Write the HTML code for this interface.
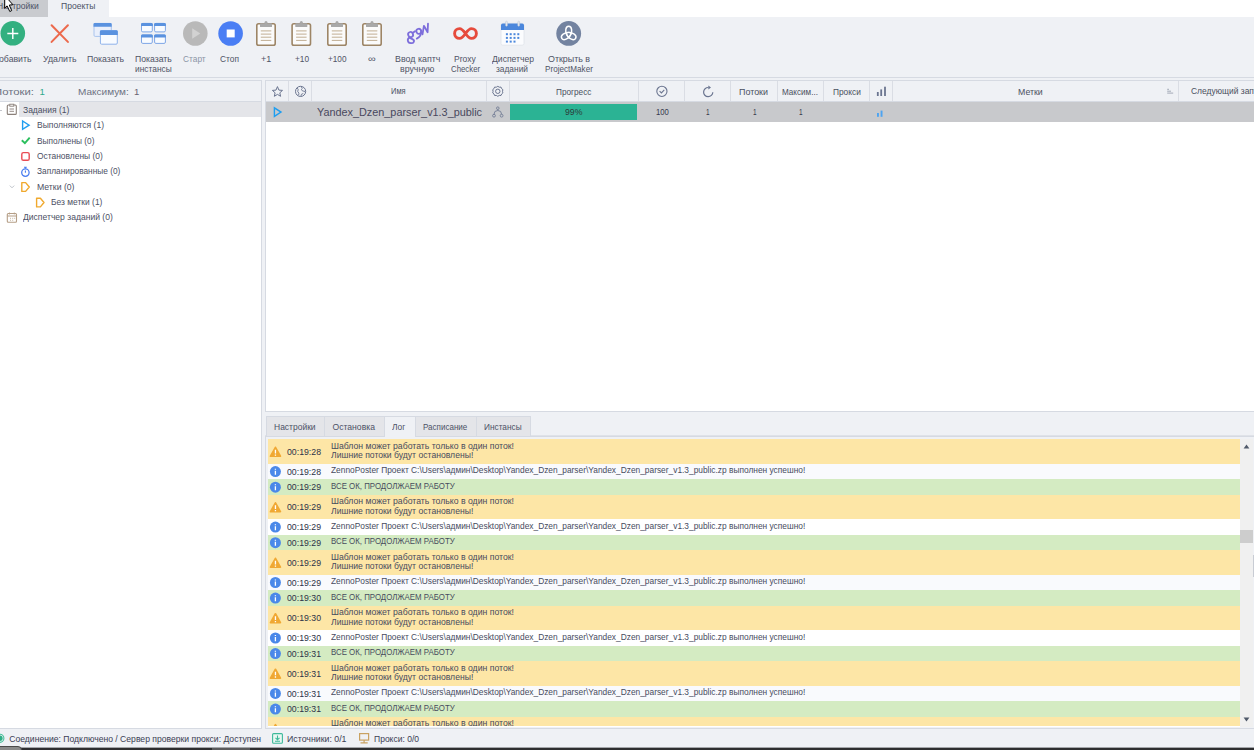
<!DOCTYPE html>
<html><head><meta charset="utf-8"><style>
html,body{margin:0;padding:0;}
body{width:1254px;height:750px;overflow:hidden;position:relative;background:#eff1f5;font-family:"Liberation Sans", sans-serif;}
.t{position:absolute;white-space:nowrap;line-height:1.117;transform-origin:0 0;font-family:"Liberation Sans", sans-serif;}
svg{overflow:visible}
</style></head><body>
<div style="position:absolute;left:0px;top:0px;width:1254px;height:17px;background:#ffffff;"></div>
<div style="position:absolute;left:0px;top:0px;width:48px;height:17px;background:#c9cbcf;"></div>
<div style="position:absolute;left:48px;top:0px;width:61px;height:17px;background:#eff1f5;"></div>
<div class="t" style="left:-3.50px;top:2.00px;font-size:8.6px;color:#4c5266;transform:scaleX(0.9919);">Настройки</div>
<div class="t" style="left:60.70px;top:2.00px;font-size:8.6px;color:#4c5266;transform:scaleX(0.9947);">Проекты</div>
<div style="position:absolute;left:0px;top:17px;width:1254px;height:60px;background:#eff1f5;"></div>
<div style="position:absolute;left:0px;top:77px;width:1254px;height:1px;background:#d6dae2;"></div>
<div style="position:absolute;left:0px;top:78px;width:1254px;height:672px;background:#eff1f5;"></div>
<svg style="position:absolute;left:0px;top:18px;" width="640" height="30" viewBox="0 18 640 30"><circle cx="12.8" cy="33.3" r="12.3" fill="#33b080"/><path d="M7.3 33.4H18.3M12.8 27.9V38.9" stroke="#fff" stroke-width="1.45"/><path d="M51.6 25.3L67.9 41.9M67.9 25.3L51.6 41.9" stroke="#ec6a4d" stroke-width="2.05" stroke-linecap="round"/><rect x="94" y="23.4" width="17.3" height="13" rx="1.2" fill="#e9effb" stroke="#a9c4ee" stroke-width="1"/><path d="M93.5 24.2a1.2 1.2 0 0 1 1.2-1.3h15.8a1.2 1.2 0 0 1 1.2 1.3V26.8H93.5Z" fill="#5a92df"/><rect x="100.4" y="30.7" width="16.9" height="13.5" rx="1.2" fill="#f8fbff" stroke="#8fb3ea" stroke-width="1"/><path d="M99.9 31.5a1.2 1.2 0 0 1 1.2-1.3h15.5a1.2 1.2 0 0 1 1.2 1.3V34.9H99.9Z" fill="#5a92df"/></svg>
<svg style="position:absolute;left:130px;top:18px;" width="50" height="30" viewBox="130 18 50 30"><rect x="141.5" y="23.4" width="10.8" height="8.5" rx="1.3" fill="#f8fbff" stroke="#7ea6e6" stroke-width="1"/><path d="M141 24.2a1.3 1.3 0 0 1 1.3-1.3h9.2a1.3 1.3 0 0 1 1.3 1.3V26.099999999999998H141Z" fill="#5a92df"/><rect x="154.6" y="23.4" width="10.8" height="8.5" rx="1.3" fill="#f8fbff" stroke="#7ea6e6" stroke-width="1"/><path d="M154.1 24.2a1.3 1.3 0 0 1 1.3-1.3h9.2a1.3 1.3 0 0 1 1.3 1.3V26.099999999999998H154.1Z" fill="#5a92df"/><rect x="141.5" y="34.9" width="10.8" height="8.5" rx="1.3" fill="#f8fbff" stroke="#7ea6e6" stroke-width="1"/><path d="M141 35.699999999999996a1.3 1.3 0 0 1 1.3-1.3h9.2a1.3 1.3 0 0 1 1.3 1.3V37.6H141Z" fill="#5a92df"/><rect x="154.6" y="34.9" width="10.8" height="8.5" rx="1.3" fill="#f8fbff" stroke="#7ea6e6" stroke-width="1"/><path d="M154.1 35.699999999999996a1.3 1.3 0 0 1 1.3-1.3h9.2a1.3 1.3 0 0 1 1.3 1.3V37.6H154.1Z" fill="#5a92df"/></svg>
<svg style="position:absolute;left:180px;top:18px;" width="70" height="30" viewBox="180 18 70 30"><circle cx="195.3" cy="33.5" r="12.3" fill="#b9b9b9"/><path d="M192.2 28.3V38.7L200.3 33.5Z" fill="#d2d2d2"/><circle cx="230.6" cy="33.5" r="12.3" fill="#4a7ef4"/><rect x="226.7" y="29.5" width="8" height="7.9" fill="#fff"/></svg>
<svg style="position:absolute;left:250px;top:18px;" width="140" height="30" viewBox="250 18 140 30"><rect x="256.8" y="23.8" width="18.4" height="21.4" rx="1.8" fill="#fbfbfb" stroke="#9d8566" stroke-width="1.6"/><rect x="260" y="23.2" width="12" height="3.8" rx="0.6" fill="#a9a9a9"/><circle cx="266" cy="22.6" r="1.5" fill="#a9a9a9"/><path d="M260.8 30.9H271.3" stroke="#c1ae93" stroke-width="1"/><path d="M260.8 34.1H271.3" stroke="#c1ae93" stroke-width="1"/><path d="M260.8 37.2H271.3" stroke="#c1ae93" stroke-width="1"/><path d="M260.8 40.4H271.3" stroke="#c1ae93" stroke-width="1"/><rect x="292.1" y="23.8" width="18.4" height="21.4" rx="1.8" fill="#fbfbfb" stroke="#9d8566" stroke-width="1.6"/><rect x="295.3" y="23.2" width="12" height="3.8" rx="0.6" fill="#a9a9a9"/><circle cx="301.3" cy="22.6" r="1.5" fill="#a9a9a9"/><path d="M296.1 30.9H306.6" stroke="#c1ae93" stroke-width="1"/><path d="M296.1 34.1H306.6" stroke="#c1ae93" stroke-width="1"/><path d="M296.1 37.2H306.6" stroke="#c1ae93" stroke-width="1"/><path d="M296.1 40.4H306.6" stroke="#c1ae93" stroke-width="1"/><rect x="327.8" y="23.8" width="18.4" height="21.4" rx="1.8" fill="#fbfbfb" stroke="#9d8566" stroke-width="1.6"/><rect x="331" y="23.2" width="12" height="3.8" rx="0.6" fill="#a9a9a9"/><circle cx="337" cy="22.6" r="1.5" fill="#a9a9a9"/><path d="M331.8 30.9H342.3" stroke="#c1ae93" stroke-width="1"/><path d="M331.8 34.1H342.3" stroke="#c1ae93" stroke-width="1"/><path d="M331.8 37.2H342.3" stroke="#c1ae93" stroke-width="1"/><path d="M331.8 40.4H342.3" stroke="#c1ae93" stroke-width="1"/><rect x="362.8" y="23.8" width="18.4" height="21.4" rx="1.8" fill="#fbfbfb" stroke="#9d8566" stroke-width="1.6"/><rect x="366" y="23.2" width="12" height="3.8" rx="0.6" fill="#a9a9a9"/><circle cx="372" cy="22.6" r="1.5" fill="#a9a9a9"/><path d="M366.8 30.9H377.3" stroke="#c1ae93" stroke-width="1"/><path d="M366.8 34.1H377.3" stroke="#c1ae93" stroke-width="1"/><path d="M366.8 37.2H377.3" stroke="#c1ae93" stroke-width="1"/><path d="M366.8 40.4H377.3" stroke="#c1ae93" stroke-width="1"/></svg>
<svg style="position:absolute;left:400px;top:18px;" width="40" height="30" viewBox="400 18 40 30"><g fill="none" stroke="#7d6edb" stroke-width="1.8" stroke-linecap="round" stroke-linejoin="round"><ellipse cx="410.6" cy="34.6" rx="2.4" ry="2.6" transform="rotate(-25 410.6 34.6)"/><path d="M412.6 33L415 31.2"/><path d="M409.8 37.4C406.8 38.6 407.2 43 410.8 43.2C414 43.4 415 40.6 412.8 39.4C411.8 38.8 410.6 38.6 409.8 37.4"/><ellipse cx="418.8" cy="31.3" rx="2.4" ry="2.5" transform="rotate(-25 418.8 31.3)"/><path d="M421.2 30.4C421.6 34 420 37 416.8 38.6"/><path d="M422.5 34.4L423.9 25.8L427.6 32.2L428 23.6"/></g></svg>
<svg style="position:absolute;left:445px;top:18px;" width="40" height="30" viewBox="445 18 40 30"><path d="M465.5 33.5C463 30 461.2 28.6 459.6 28.6C456.6 28.6 454.6 31 454.6 33.5C454.6 36 456.6 38.4 459.6 38.4C461.2 38.4 463 37 465.5 33.5C468 30 469.8 28.6 471.4 28.6C474.4 28.6 476.4 31 476.4 33.5C476.4 36 474.4 38.4 471.4 38.4C469.8 38.4 468 37 465.5 33.5Z" fill="none" stroke="#e64b3c" stroke-width="2.9"/></svg>
<svg style="position:absolute;left:495px;top:18px;" width="35" height="30" viewBox="495 18 35 30"><rect x="501" y="23.4" width="23" height="21.8" rx="1.8" fill="#fbfcfe" stroke="#dfe3ea" stroke-width="0.8"/><path d="M501 25.2a1.8 1.8 0 0 1 1.8-1.8h19.4a1.8 1.8 0 0 1 1.8 1.8V30.1H501Z" fill="#4b87dc"/><rect x="505.6" y="21.2" width="1.8" height="5" rx="0.8" fill="#e8ebf0" stroke="#b9c3d2" stroke-width="0.5"/><rect x="517.8" y="21.2" width="1.8" height="5" rx="0.8" fill="#e8ebf0" stroke="#b9c3d2" stroke-width="0.5"/><rect x="505.9" y="33.2" width="2" height="2" fill="#4b87dc"/><rect x="509.7" y="33.2" width="2" height="2" fill="#4b87dc"/><rect x="513.5" y="33.2" width="2" height="2" fill="#4b87dc"/><rect x="517.3" y="33.2" width="2" height="2" fill="#4b87dc"/><rect x="505.9" y="36.9" width="2" height="2" fill="#4b87dc"/><rect x="509.7" y="36.9" width="2" height="2" fill="#4b87dc"/><rect x="513.5" y="36.9" width="2" height="2" fill="#4b87dc"/><rect x="517.3" y="36.9" width="2" height="2" fill="#4b87dc"/><rect x="505.9" y="40.6" width="2" height="2" fill="#4b87dc"/><rect x="509.7" y="40.6" width="2" height="2" fill="#4b87dc"/><rect x="513.5" y="40.6" width="2" height="2" fill="#4b87dc"/></svg>
<svg style="position:absolute;left:550px;top:18px;" width="40" height="30" viewBox="550 18 40 30"><circle cx="568.7" cy="33.4" r="12.4" fill="#7383a0"/><path d="M568.7 37.3C566.3 35 565.6 31.6 565.8 29.6C566 27.5 567.2 26.3 568.7 26.3C570.2 26.3 571.4 27.5 571.6 29.6C571.8 31.6 571.1 35 568.7 37.3Z" transform="rotate(0 568.7 34.3)" fill="none" stroke="#fff" stroke-width="1.45"/><path d="M568.7 37.3C566.3 35 565.6 31.6 565.8 29.6C566 27.5 567.2 26.3 568.7 26.3C570.2 26.3 571.4 27.5 571.6 29.6C571.8 31.6 571.1 35 568.7 37.3Z" transform="rotate(120 568.7 34.3)" fill="none" stroke="#fff" stroke-width="1.45"/><path d="M568.7 37.3C566.3 35 565.6 31.6 565.8 29.6C566 27.5 567.2 26.3 568.7 26.3C570.2 26.3 571.4 27.5 571.6 29.6C571.8 31.6 571.1 35 568.7 37.3Z" transform="rotate(240 568.7 34.3)" fill="none" stroke="#fff" stroke-width="1.45"/></svg>
<div class="t" style="left:-7.00px;top:54.00px;font-size:9.1px;color:#4f5466;transform:scaleX(0.9576);">Добавить</div>
<div class="t" style="left:42.70px;top:54.00px;font-size:9.1px;color:#4f5466;transform:scaleX(0.9649);">Удалить</div>
<div class="t" style="left:86.90px;top:54.00px;font-size:9.1px;color:#4f5466;transform:scaleX(0.9568);">Показать</div>
<div class="t" style="left:134.80px;top:54.00px;font-size:9.1px;color:#4f5466;transform:scaleX(0.9490);">Показать</div>
<div class="t" style="left:134.90px;top:64.00px;font-size:9.1px;color:#4f5466;transform:scaleX(0.9204);">инстансы</div>
<div class="t" style="left:183.00px;top:54.00px;font-size:9.1px;color:#8c95a6;transform:scaleX(0.9183);">Старт</div>
<div class="t" style="left:220.00px;top:54.00px;font-size:9.1px;color:#4f5466;transform:scaleX(0.9212);">Стоп</div>
<div class="t" style="left:261.00px;top:54.00px;font-size:9.1px;color:#4f5466;transform:scaleX(0.9928);">+1</div>
<div class="t" style="left:294.50px;top:54.00px;font-size:9.1px;color:#4f5466;transform:scaleX(0.9134);">+10</div>
<div class="t" style="left:327.80px;top:54.00px;font-size:9.1px;color:#4f5466;transform:scaleX(0.9031);">+100</div>
<div class="t" style="left:368.40px;top:54.00px;font-size:9.1px;color:#4f5466;transform:scaleX(1.2029);">∞</div>
<div class="t" style="left:394.60px;top:54.00px;font-size:9.1px;color:#4f5466;transform:scaleX(0.9750);">Ввод каптч</div>
<div class="t" style="left:399.70px;top:64.00px;font-size:9.1px;color:#4f5466;transform:scaleX(0.9670);">вручную</div>
<div class="t" style="left:454.00px;top:54.00px;font-size:9.1px;color:#4f5466;transform:scaleX(0.9376);">Proxy</div>
<div class="t" style="left:450.90px;top:64.00px;font-size:9.1px;color:#4f5466;transform:scaleX(0.8590);">Checker</div>
<div class="t" style="left:491.70px;top:54.00px;font-size:9.1px;color:#4f5466;transform:scaleX(0.9464);">Диспетчер</div>
<div class="t" style="left:496.00px;top:64.00px;font-size:9.1px;color:#4f5466;transform:scaleX(0.9200);">заданий</div>
<div class="t" style="left:547.70px;top:54.00px;font-size:9.1px;color:#4f5466;transform:scaleX(0.9773);">Открыть в</div>
<div class="t" style="left:544.80px;top:64.00px;font-size:9.1px;color:#4f5466;transform:scaleX(0.8940);">ProjectMaker</div>
<div style="position:absolute;left:0px;top:80px;width:262px;height:1px;background:#d6dae2;"></div>
<div style="position:absolute;left:261px;top:80px;width:1px;height:649px;background:#d6dae2;"></div>
<div style="position:absolute;left:0px;top:101px;width:261px;height:1px;background:#d6dae2;"></div>
<div style="position:absolute;left:0px;top:102px;width:261px;height:626px;background:#ffffff;"></div>
<div style="position:absolute;left:0px;top:728px;width:262px;height:1px;background:#d6dae2;"></div>
<div class="t" style="left:-6.50px;top:87.00px;font-size:9.6px;color:#6d7282;transform:scaleX(1.1808);">Потоки:</div>
<div class="t" style="left:39.50px;top:87.00px;font-size:9.6px;color:#2fa98b;">1</div>
<div class="t" style="left:77.80px;top:87.00px;font-size:9.6px;color:#6d7282;transform:scaleX(1.0461);">Максимум:</div>
<div class="t" style="left:134.10px;top:87.00px;font-size:9.6px;color:#6a6472;">1</div>
<div style="position:absolute;left:19px;top:102px;width:242px;height:15px;background:#e4e5e9;"></div>
<div style="position:absolute;left:0px;top:109.5px;width:2px;height:1px;background:#c4c6cc;"></div>
<svg style="position:absolute;left:0px;top:100px;" width="60" height="130" viewBox="0 100 60 130"><rect x="7.3" y="105" width="9" height="9.4" rx="1" fill="none" stroke="#8b807a" stroke-width="1.1"/><rect x="9.8" y="104.2" width="4" height="2" fill="#fff" stroke="#8b807a" stroke-width="0.9"/><path d="M9.5 109H14M9.5 111.3H14" stroke="#8b807a" stroke-width="0.9"/><path d="M22.6 121V129.3L29.1 125.15Z" fill="none" stroke="#1f9ef0" stroke-width="1.4" stroke-linejoin="miter"/><path d="M21.8 140.2L24.9 143.2L29.7 137.6" fill="none" stroke="#2bbf5e" stroke-width="1.9"/><rect x="21.8" y="152.6" width="7.4" height="7.7" rx="1.6" fill="none" stroke="#e94b53" stroke-width="1.4"/><circle cx="25.4" cy="172.6" r="3.7" fill="none" stroke="#4a7ef0" stroke-width="1.3"/><path d="M24 167.3H26.8M25.4 167.3V168.8M25.4 172.8V170.6" stroke="#4a7ef0" stroke-width="1.1"/><path d="M9.8 185.6L12 187.8L14.2 185.6" fill="none" stroke="#b8bcc4" stroke-width="0.9"/><path d="M21.8 182.6H25.6L29.3 187L25.6 191.4H21.8Z" fill="none" stroke="#f0a92e" stroke-width="1.4" stroke-linejoin="round"/><path d="M36.6 198.2H40.4L44 202.5L40.4 206.9H36.6Z" fill="none" stroke="#f0a92e" stroke-width="1.4" stroke-linejoin="round"/><rect x="7.3" y="213.5" width="9.2" height="8.8" rx="1" fill="none" stroke="#b59e86" stroke-width="1.1"/><path d="M7.3 216H16.5M9.5 212.6V214.4M14.3 212.6V214.4" stroke="#b59e86" stroke-width="1"/><path d="M10 218.3h1M12.2 218.3h1M14.2 218.3h1M10 220.3h1M12.2 220.3h1" stroke="#c9b8a5" stroke-width="1"/></svg>
<div class="t" style="left:22.80px;top:106.00px;font-size:8.6px;color:#4c5064;transform:scaleX(0.9902);">Задания (1)</div>
<div class="t" style="left:36.90px;top:121.00px;font-size:8.6px;color:#4c5064;transform:scaleX(0.9924);">Выполняются (1)</div>
<div class="t" style="left:36.90px;top:137.00px;font-size:8.6px;color:#4c5064;transform:scaleX(0.9645);">Выполнены (0)</div>
<div class="t" style="left:36.90px;top:152.00px;font-size:8.6px;color:#4c5064;transform:scaleX(0.9805);">Остановлены (0)</div>
<div class="t" style="left:36.90px;top:167.00px;font-size:8.6px;color:#4c5064;transform:scaleX(0.9684);">Запланированные (0)</div>
<div class="t" style="left:36.90px;top:183.00px;font-size:8.6px;color:#4c5064;transform:scaleX(1.0097);">Метки (0)</div>
<div class="t" style="left:50.60px;top:198.00px;font-size:8.6px;color:#4c5064;transform:scaleX(0.9817);">Без метки (1)</div>
<div class="t" style="left:23.30px;top:213.00px;font-size:8.6px;color:#4c5064;transform:scaleX(0.9957);">Диспетчер заданий (0)</div>
<div style="position:absolute;left:265px;top:80px;width:989px;height:332px;background:#d6dae2;"></div>
<div style="position:absolute;left:266px;top:81px;width:988px;height:20px;background:#eff1f5;"></div>
<div style="position:absolute;left:266px;top:102px;width:988px;height:309px;background:#ffffff;"></div>
<div style="position:absolute;left:266px;top:102px;width:988px;height:19.5px;background:#c8c9cc;"></div>
<div style="position:absolute;left:288px;top:81px;width:1px;height:20px;background:#dadde4;"></div>
<div style="position:absolute;left:311px;top:81px;width:1px;height:20px;background:#dadde4;"></div>
<div style="position:absolute;left:486px;top:81px;width:1px;height:20px;background:#dadde4;"></div>
<div style="position:absolute;left:509px;top:81px;width:1px;height:20px;background:#dadde4;"></div>
<div style="position:absolute;left:638px;top:81px;width:1px;height:20px;background:#dadde4;"></div>
<div style="position:absolute;left:684px;top:81px;width:1px;height:20px;background:#dadde4;"></div>
<div style="position:absolute;left:730px;top:81px;width:1px;height:20px;background:#dadde4;"></div>
<div style="position:absolute;left:777px;top:81px;width:1px;height:20px;background:#dadde4;"></div>
<div style="position:absolute;left:823px;top:81px;width:1px;height:20px;background:#dadde4;"></div>
<div style="position:absolute;left:869px;top:81px;width:1px;height:20px;background:#dadde4;"></div>
<div style="position:absolute;left:892px;top:81px;width:1px;height:20px;background:#dadde4;"></div>
<div style="position:absolute;left:1178px;top:81px;width:1px;height:20px;background:#dadde4;"></div>
<div class="t" style="left:391.20px;top:87.00px;font-size:8.4px;color:#4a5060;transform:scaleX(0.8950);">Имя</div>
<div class="t" style="left:555.80px;top:88.00px;font-size:8.4px;color:#4a5060;transform:scaleX(0.9808);">Прогресс</div>
<div class="t" style="left:739.20px;top:88.00px;font-size:8.4px;color:#4a5060;transform:scaleX(1.0642);">Потоки</div>
<div class="t" style="left:782.30px;top:88.00px;font-size:8.4px;color:#4a5060;transform:scaleX(0.9678);">Максим...</div>
<div class="t" style="left:832.50px;top:88.00px;font-size:8.4px;color:#4a5060;transform:scaleX(0.9940);">Прокси</div>
<div class="t" style="left:1018.00px;top:88.00px;font-size:8.4px;color:#4a5060;transform:scaleX(1.0448);">Метки</div>
<div class="t" style="left:1191.00px;top:87.00px;font-size:8.6px;color:#4a5060;transform:scaleX(0.9834);">Следующий запуск</div>
<svg style="position:absolute;left:266px;top:81px;" width="988" height="41" viewBox="266 81 988 41"><path d="M277.45 86.6L278.9 90.1L282.5 90.4L279.8 92.8L280.6 96.3L277.45 94.4L274.3 96.3L275.1 92.8L272.4 90.4L276 90.1Z" fill="none" stroke="#6b7590" stroke-width="1" stroke-linejoin="round"/><circle cx="300.6" cy="91.4" r="5.1" fill="none" stroke="#6b7590" stroke-width="1"/><path d="M297.2 87.8L298.3 89.8L297.6 91.2L298.9 93.2L298.6 95.3M301.2 86.5L302.3 88.5L301.2 89.6L303 91.2L304.3 91L305.4 92.5M300.8 96.2L301.5 94.2L303.3 93.5" fill="none" stroke="#6b7590" stroke-width="0.9"/><path d="M497.8 86.3L499.3 87.2L501 87.1L501.6 88.6L502.9 89.7L502.5 91.3L502.9 92.9L501.6 94L501 95.5L499.3 95.4L497.8 96.3L496.3 95.4L494.6 95.5L494 94L492.7 92.9L493.1 91.3L492.7 89.7L494 88.6L494.6 87.1L496.3 87.2Z" fill="none" stroke="#6b7590" stroke-width="1"/><circle cx="497.8" cy="91.3" r="2.2" fill="none" stroke="#6b7590" stroke-width="1"/><circle cx="661.9" cy="91.35" r="5.1" fill="none" stroke="#6b7590" stroke-width="1.1"/><path d="M659.6 91.2L661.4 92.9L664.3 89.9" fill="none" stroke="#6b7590" stroke-width="1.1"/><path d="M712.8 92.2A4.6 4.6 0 1 1 708.4 87.5" fill="none" stroke="#6b7590" stroke-width="1.2"/><path d="M708.3 85.5L711 87.5L708.3 89.5Z" fill="#6b7590"/><rect x="876.9" y="92" width="1.8" height="4" fill="#6b7590"/><rect x="880.3" y="89.4" width="1.8" height="6.6" fill="#6b7590"/><rect x="884.1" y="86.7" width="1.8" height="9.3" fill="#6b7590"/><path d="M1167.2 89.3H1169M1167.2 91.2H1171M1167.2 93.1H1173.2" stroke="#9aa1b0" stroke-width="0.9"/><path d="M274.4 107.8V116.4L281 112.1Z" fill="none" stroke="#1f9ef0" stroke-width="1.4"/><circle cx="497.8" cy="108.2" r="1.3" fill="none" stroke="#737d95" stroke-width="0.9"/><path d="M497.8 109.5V110.5M494 114.3A3.8 3.8 0 0 1 501.6 114.3" fill="none" stroke="#737d95" stroke-width="0.9"/><circle cx="494" cy="115.7" r="1.4" fill="none" stroke="#737d95" stroke-width="0.9"/><circle cx="501.6" cy="115.7" r="1.4" fill="none" stroke="#737d95" stroke-width="0.9"/><rect x="877" y="113" width="1.9" height="3.8" fill="#4ca4f2"/><rect x="880.6" y="110.6" width="1.9" height="6.2" fill="#4ca4f2"/></svg>
<div style="position:absolute;left:510px;top:104px;width:127px;height:16px;background:#2bb394;"></div>
<div class="t" style="left:316.80px;top:107.00px;font-size:10.3px;color:#48485e;transform:scaleX(1.0533);">Yandex_Dzen_parser_v1.3_public</div>
<div class="t" style="left:564.60px;top:108.00px;font-size:8.6px;color:#2d3a3a;transform:scaleX(1.0114);">99%</div>
<div class="t" style="left:655.50px;top:108.00px;font-size:8.6px;color:#363a4c;transform:scaleX(0.8924);">100</div>
<div class="t" style="left:706.30px;top:108.00px;font-size:8.6px;color:#363a4c;transform:scaleX(0.7529);">1</div>
<div class="t" style="left:752.50px;top:108.00px;font-size:8.6px;color:#363a4c;transform:scaleX(0.7529);">1</div>
<div class="t" style="left:798.70px;top:108.00px;font-size:8.6px;color:#363a4c;transform:scaleX(0.7529);">1</div>
<div style="position:absolute;left:265px;top:435px;width:989px;height:1px;background:#dfe2e8;"></div>
<div style="position:absolute;left:266px;top:416px;width:59px;height:20px;background:#d6dae2;"></div>
<div style="position:absolute;left:267px;top:417px;width:57px;height:19px;background:#e4e5e9;"></div>
<div class="t" style="left:273.90px;top:423.00px;font-size:8.6px;color:#4c5266;transform:scaleX(0.9872);">Настройки</div>
<div style="position:absolute;left:324px;top:416px;width:61px;height:20px;background:#d6dae2;"></div>
<div style="position:absolute;left:325px;top:417px;width:59px;height:19px;background:#e4e5e9;"></div>
<div class="t" style="left:332.50px;top:423.00px;font-size:8.6px;color:#4c5266;">Остановка</div>
<div style="position:absolute;left:415px;top:416px;width:62px;height:20px;background:#d6dae2;"></div>
<div style="position:absolute;left:416px;top:417px;width:60px;height:19px;background:#e4e5e9;"></div>
<div class="t" style="left:422.70px;top:423.00px;font-size:8.6px;color:#4c5266;transform:scaleX(0.9348);">Расписание</div>
<div style="position:absolute;left:476px;top:416px;width:55px;height:20px;background:#d6dae2;"></div>
<div style="position:absolute;left:477px;top:417px;width:53px;height:19px;background:#e4e5e9;"></div>
<div class="t" style="left:484.40px;top:423.00px;font-size:8.6px;color:#4c5266;transform:scaleX(0.9626);">Инстансы</div>
<div style="position:absolute;left:265px;top:436px;width:989px;height:293px;background:#d6dae2;"></div>
<div style="position:absolute;left:266px;top:437px;width:988px;height:291px;background:#eff1f5;"></div>
<div style="position:absolute;left:384px;top:416px;width:32px;height:21px;background:#d6dae2;"></div>
<div style="position:absolute;left:385px;top:417px;width:30px;height:21px;background:#eff1f5;"></div>
<div class="t" style="left:392.20px;top:423.00px;font-size:8.6px;color:#4c5266;transform:scaleX(0.9806);">Лог</div>
<div style="position:absolute;left:268px;top:439px;width:972px;height:288px;background:#ffffff;"></div>
<div style="position:absolute;left:268px;top:439px;width:972px;height:287px;overflow:hidden">
<div style="position:absolute;left:0px;top:0px;width:973px;height:25px;background:#fde6a6;"></div>
<div style="position:absolute;left:0px;top:25px;width:973px;height:15px;background:#f9fafd;"></div>
<div style="position:absolute;left:0px;top:40px;width:973px;height:16px;background:#d4ebc2;"></div>
<div style="position:absolute;left:0px;top:56px;width:973px;height:24px;background:#fde6a6;"></div>
<div style="position:absolute;left:0px;top:80px;width:973px;height:16px;background:#ffffff;"></div>
<div style="position:absolute;left:0px;top:96px;width:973px;height:15px;background:#d4ebc2;"></div>
<div style="position:absolute;left:0px;top:111px;width:973px;height:25px;background:#fde6a6;"></div>
<div style="position:absolute;left:0px;top:136px;width:973px;height:15px;background:#f9fafd;"></div>
<div style="position:absolute;left:0px;top:151px;width:973px;height:16px;background:#d4ebc2;"></div>
<div style="position:absolute;left:0px;top:167px;width:973px;height:24px;background:#fde6a6;"></div>
<div style="position:absolute;left:0px;top:191px;width:973px;height:16px;background:#ffffff;"></div>
<div style="position:absolute;left:0px;top:207px;width:973px;height:15px;background:#d4ebc2;"></div>
<div style="position:absolute;left:0px;top:222px;width:973px;height:25px;background:#fde6a6;"></div>
<div style="position:absolute;left:0px;top:247px;width:973px;height:15px;background:#f9fafd;"></div>
<div style="position:absolute;left:0px;top:262px;width:973px;height:16px;background:#d4ebc2;"></div>
<div style="position:absolute;left:0px;top:278px;width:973px;height:24px;background:#fde6a6;"></div>
</div>
<svg style="position:absolute;left:267px;top:439px;overflow:hidden" width="20" height="287" viewBox="267 439 20 287"><path d="M275.45 447.35L280.4 456.15H270.5Z" fill="#f0a833" stroke="#f0a833" stroke-width="1.7" stroke-linejoin="round"/><path d="M275.45 449.75V453.45M275.45 454.45V455.75" stroke="#fff" stroke-width="1.3"/><circle cx="275.4" cy="471.55" r="5.5" fill="#4a88e9"/><path d="M275.4 468.65V469.65M275.4 470.65V474.75" stroke="#fff" stroke-width="1.3"/><circle cx="275.4" cy="487.15" r="5.5" fill="#4a88e9"/><path d="M275.4 484.25V485.25M275.4 486.25V490.35" stroke="#fff" stroke-width="1.3"/><path d="M275.45 502.83L280.4 511.63H270.5Z" fill="#f0a833" stroke="#f0a833" stroke-width="1.7" stroke-linejoin="round"/><path d="M275.45 505.23V508.93M275.45 509.93V511.23" stroke="#fff" stroke-width="1.3"/><circle cx="275.4" cy="527.03" r="5.5" fill="#4a88e9"/><path d="M275.4 524.13V525.13M275.4 526.13V530.23" stroke="#fff" stroke-width="1.3"/><circle cx="275.4" cy="542.63" r="5.5" fill="#4a88e9"/><path d="M275.4 539.73V540.73M275.4 541.73V545.83" stroke="#fff" stroke-width="1.3"/><path d="M275.45 558.31L280.4 567.11H270.5Z" fill="#f0a833" stroke="#f0a833" stroke-width="1.7" stroke-linejoin="round"/><path d="M275.45 560.71V564.41M275.45 565.41V566.71" stroke="#fff" stroke-width="1.3"/><circle cx="275.4" cy="582.51" r="5.5" fill="#4a88e9"/><path d="M275.4 579.61V580.61M275.4 581.61V585.71" stroke="#fff" stroke-width="1.3"/><circle cx="275.4" cy="598.11" r="5.5" fill="#4a88e9"/><path d="M275.4 595.21V596.21M275.4 597.21V601.31" stroke="#fff" stroke-width="1.3"/><path d="M275.45 613.79L280.4 622.59H270.5Z" fill="#f0a833" stroke="#f0a833" stroke-width="1.7" stroke-linejoin="round"/><path d="M275.45 616.19V619.89M275.45 620.89V622.19" stroke="#fff" stroke-width="1.3"/><circle cx="275.4" cy="637.99" r="5.5" fill="#4a88e9"/><path d="M275.4 635.09V636.09M275.4 637.09V641.19" stroke="#fff" stroke-width="1.3"/><circle cx="275.4" cy="653.59" r="5.5" fill="#4a88e9"/><path d="M275.4 650.69V651.69M275.4 652.69V656.79" stroke="#fff" stroke-width="1.3"/><path d="M275.45 669.27L280.4 678.07H270.5Z" fill="#f0a833" stroke="#f0a833" stroke-width="1.7" stroke-linejoin="round"/><path d="M275.45 671.67V675.37M275.45 676.37V677.67" stroke="#fff" stroke-width="1.3"/><circle cx="275.4" cy="693.47" r="5.5" fill="#4a88e9"/><path d="M275.4 690.57V691.57M275.4 692.57V696.67" stroke="#fff" stroke-width="1.3"/><circle cx="275.4" cy="709.07" r="5.5" fill="#4a88e9"/><path d="M275.4 706.17V707.17M275.4 708.17V712.27" stroke="#fff" stroke-width="1.3"/><path d="M275.45 724.75L280.4 733.55H270.5Z" fill="#f0a833" stroke="#f0a833" stroke-width="1.7" stroke-linejoin="round"/><path d="M275.45 727.15V730.85M275.45 731.85V733.15" stroke="#fff" stroke-width="1.3"/></svg>
<div style="position:absolute;left:0;top:0;width:1240px;height:726px;overflow:hidden">
<div class="t" style="left:287.00px;top:448.00px;font-size:8.7px;color:#2d3247;transform:scaleX(1.0051);">00:19:28</div>
<div class="t" style="left:331.20px;top:442.00px;font-size:8.2px;color:#474b5e;transform:scaleX(1.0605);">Шаблон может работать только в один поток!</div>
<div class="t" style="left:331.20px;top:451.00px;font-size:8.2px;color:#474b5e;transform:scaleX(1.0522);">Лишние потоки будут остановлены!</div>
<div class="t" style="left:287.00px;top:468.00px;font-size:8.7px;color:#2d3247;transform:scaleX(1.0051);">00:19:28</div>
<div class="t" style="left:331.20px;top:466.00px;font-size:8.2px;color:#474b5e;transform:scaleX(1.0210);">ZennoPoster Проект C:\Users\админ\Desktop\Yandex_Dzen_parser\Yandex_Dzen_parser_v1.3_public.zp выполнен успешно!</div>
<div class="t" style="left:287.00px;top:483.00px;font-size:8.7px;color:#2d3247;transform:scaleX(1.0051);">00:19:29</div>
<div class="t" style="left:331.20px;top:482.00px;font-size:8.2px;color:#474b5e;transform:scaleX(0.9605);">ВСЕ ОК, ПРОДОЛЖАЕМ РАБОТУ</div>
<div class="t" style="left:287.00px;top:503.00px;font-size:8.7px;color:#2d3247;transform:scaleX(1.0051);">00:19:29</div>
<div class="t" style="left:331.20px;top:497.00px;font-size:8.2px;color:#474b5e;transform:scaleX(1.0605);">Шаблон может работать только в один поток!</div>
<div class="t" style="left:331.20px;top:507.00px;font-size:8.2px;color:#474b5e;transform:scaleX(1.0522);">Лишние потоки будут остановлены!</div>
<div class="t" style="left:287.00px;top:523.00px;font-size:8.7px;color:#2d3247;transform:scaleX(1.0051);">00:19:29</div>
<div class="t" style="left:331.20px;top:522.00px;font-size:8.2px;color:#474b5e;transform:scaleX(1.0210);">ZennoPoster Проект C:\Users\админ\Desktop\Yandex_Dzen_parser\Yandex_Dzen_parser_v1.3_public.zp выполнен успешно!</div>
<div class="t" style="left:287.00px;top:539.00px;font-size:8.7px;color:#2d3247;transform:scaleX(1.0051);">00:19:29</div>
<div class="t" style="left:331.20px;top:537.00px;font-size:8.2px;color:#474b5e;transform:scaleX(0.9605);">ВСЕ ОК, ПРОДОЛЖАЕМ РАБОТУ</div>
<div class="t" style="left:287.00px;top:559.00px;font-size:8.7px;color:#2d3247;transform:scaleX(1.0051);">00:19:29</div>
<div class="t" style="left:331.20px;top:553.00px;font-size:8.2px;color:#474b5e;transform:scaleX(1.0605);">Шаблон может работать только в один поток!</div>
<div class="t" style="left:331.20px;top:562.00px;font-size:8.2px;color:#474b5e;transform:scaleX(1.0522);">Лишние потоки будут остановлены!</div>
<div class="t" style="left:287.00px;top:579.00px;font-size:8.7px;color:#2d3247;transform:scaleX(1.0051);">00:19:29</div>
<div class="t" style="left:331.20px;top:577.00px;font-size:8.2px;color:#474b5e;transform:scaleX(1.0210);">ZennoPoster Проект C:\Users\админ\Desktop\Yandex_Dzen_parser\Yandex_Dzen_parser_v1.3_public.zp выполнен успешно!</div>
<div class="t" style="left:287.00px;top:594.00px;font-size:8.7px;color:#2d3247;transform:scaleX(1.0051);">00:19:30</div>
<div class="t" style="left:331.20px;top:593.00px;font-size:8.2px;color:#474b5e;transform:scaleX(0.9605);">ВСЕ ОК, ПРОДОЛЖАЕМ РАБОТУ</div>
<div class="t" style="left:287.00px;top:614.00px;font-size:8.7px;color:#2d3247;transform:scaleX(1.0051);">00:19:30</div>
<div class="t" style="left:331.20px;top:608.00px;font-size:8.2px;color:#474b5e;transform:scaleX(1.0605);">Шаблон может работать только в один поток!</div>
<div class="t" style="left:331.20px;top:618.00px;font-size:8.2px;color:#474b5e;transform:scaleX(1.0522);">Лишние потоки будут остановлены!</div>
<div class="t" style="left:287.00px;top:634.00px;font-size:8.7px;color:#2d3247;transform:scaleX(1.0051);">00:19:30</div>
<div class="t" style="left:331.20px;top:633.00px;font-size:8.2px;color:#474b5e;transform:scaleX(1.0210);">ZennoPoster Проект C:\Users\админ\Desktop\Yandex_Dzen_parser\Yandex_Dzen_parser_v1.3_public.zp выполнен успешно!</div>
<div class="t" style="left:287.00px;top:650.00px;font-size:8.7px;color:#2d3247;transform:scaleX(1.0051);">00:19:31</div>
<div class="t" style="left:331.20px;top:648.00px;font-size:8.2px;color:#474b5e;transform:scaleX(0.9605);">ВСЕ ОК, ПРОДОЛЖАЕМ РАБОТУ</div>
<div class="t" style="left:287.00px;top:670.00px;font-size:8.7px;color:#2d3247;transform:scaleX(1.0051);">00:19:31</div>
<div class="t" style="left:331.20px;top:664.00px;font-size:8.2px;color:#474b5e;transform:scaleX(1.0605);">Шаблон может работать только в один поток!</div>
<div class="t" style="left:331.20px;top:673.00px;font-size:8.2px;color:#474b5e;transform:scaleX(1.0522);">Лишние потоки будут остановлены!</div>
<div class="t" style="left:287.00px;top:690.00px;font-size:8.7px;color:#2d3247;transform:scaleX(1.0051);">00:19:31</div>
<div class="t" style="left:331.20px;top:688.00px;font-size:8.2px;color:#474b5e;transform:scaleX(1.0210);">ZennoPoster Проект C:\Users\админ\Desktop\Yandex_Dzen_parser\Yandex_Dzen_parser_v1.3_public.zp выполнен успешно!</div>
<div class="t" style="left:287.00px;top:705.00px;font-size:8.7px;color:#2d3247;transform:scaleX(1.0051);">00:19:31</div>
<div class="t" style="left:331.20px;top:704.00px;font-size:8.2px;color:#474b5e;transform:scaleX(0.9605);">ВСЕ ОК, ПРОДОЛЖАЕМ РАБОТУ</div>
<div class="t" style="left:287.00px;top:725.00px;font-size:8.7px;color:#2d3247;transform:scaleX(1.0051);">00:19:31</div>
<div class="t" style="left:331.20px;top:719.00px;font-size:8.2px;color:#474b5e;transform:scaleX(1.0605);">Шаблон может работать только в один поток!</div>
<div class="t" style="left:331.20px;top:729.00px;font-size:8.2px;color:#474b5e;transform:scaleX(1.0522);">Лишние потоки будут остановлены!</div>
</div>
<div style="position:absolute;left:1240px;top:439px;width:13px;height:288px;background:#f0f0f0;"></div>
<div style="position:absolute;left:1240px;top:530px;width:13px;height:13px;background:#cdcdcd;"></div>
<svg style="position:absolute;left:1240px;top:439px;" width="14" height="288" viewBox="1240 439 14 288"><path d="M1243.6 448.4L1246.5 444.6L1249.4 448.4Z" fill="#505a6a"/><path d="M1243.6 717.6L1246.5 721.4L1249.4 717.6Z" fill="#505a6a"/><rect x="1253" y="555" width="1" height="22" fill="#c8ccd4"/></svg>
<svg style="position:absolute;left:0px;top:729px;" width="450" height="18" viewBox="0 729 450 18"><circle cx="-0.2" cy="738.3" r="4.1" fill="none" stroke="#45c09a" stroke-width="1.1"/><circle cx="-0.2" cy="738.3" r="2.8" fill="#2fae86"/><rect x="272.6" y="733.6" width="9.8" height="9.6" rx="1" fill="#e9f7f2" stroke="#3db99a" stroke-width="1.1"/><path d="M277.5 735.5V739.5M275.5 737.8L277.5 739.8L279.5 737.8M275 741.3H280" fill="none" stroke="#3db99a" stroke-width="1.1"/><rect x="359.6" y="733.6" width="9" height="6.5" fill="none" stroke="#c9a262" stroke-width="1.2"/><path d="M364.1 740.1V742.6M360.5 742.8H367.7" stroke="#c9a262" stroke-width="1.2"/></svg>
<div class="t" style="left:9.25px;top:735.00px;font-size:8.6px;color:#3b4054;">Соединение: Подключено / Сервер проверки прокси: Доступен</div>
<div class="t" style="left:287.00px;top:735.00px;font-size:8.6px;color:#3b4054;transform:scaleX(1.0220);">Источники: 0/1</div>
<div class="t" style="left:373.60px;top:735.00px;font-size:8.6px;color:#3b4054;transform:scaleX(0.9929);">Прокси: 0/0</div>
<div style="position:absolute;left:0px;top:747.5px;width:1254px;height:2.5px;background:#2e2e30;"></div>
<div style="position:absolute;left:0px;top:747px;width:1254px;height:1px;background:#a4a6aa;"></div>
<div style="position:absolute;left:212px;top:748px;width:38px;height:2px;background:#5a5a5c;"></div>
<div style="position:absolute;left:-4px;top:745.8px;width:26px;height:8px;background:#8a8a8a;border:1.5px solid #4a4a4a;border-radius:5px;box-sizing:border-box"></div>
<svg style="position:absolute;left:0px;top:0px;" width="20" height="16" viewBox="0 0 20 16"><path d="M4.7 -4.5V8.1L7.1 5.9L9.8 11.5L11.7 10.6L9.3 5.1L12.9 4.7Z" fill="#fff" stroke="#000" stroke-width="1" stroke-linejoin="round"/></svg>
</body></html>
